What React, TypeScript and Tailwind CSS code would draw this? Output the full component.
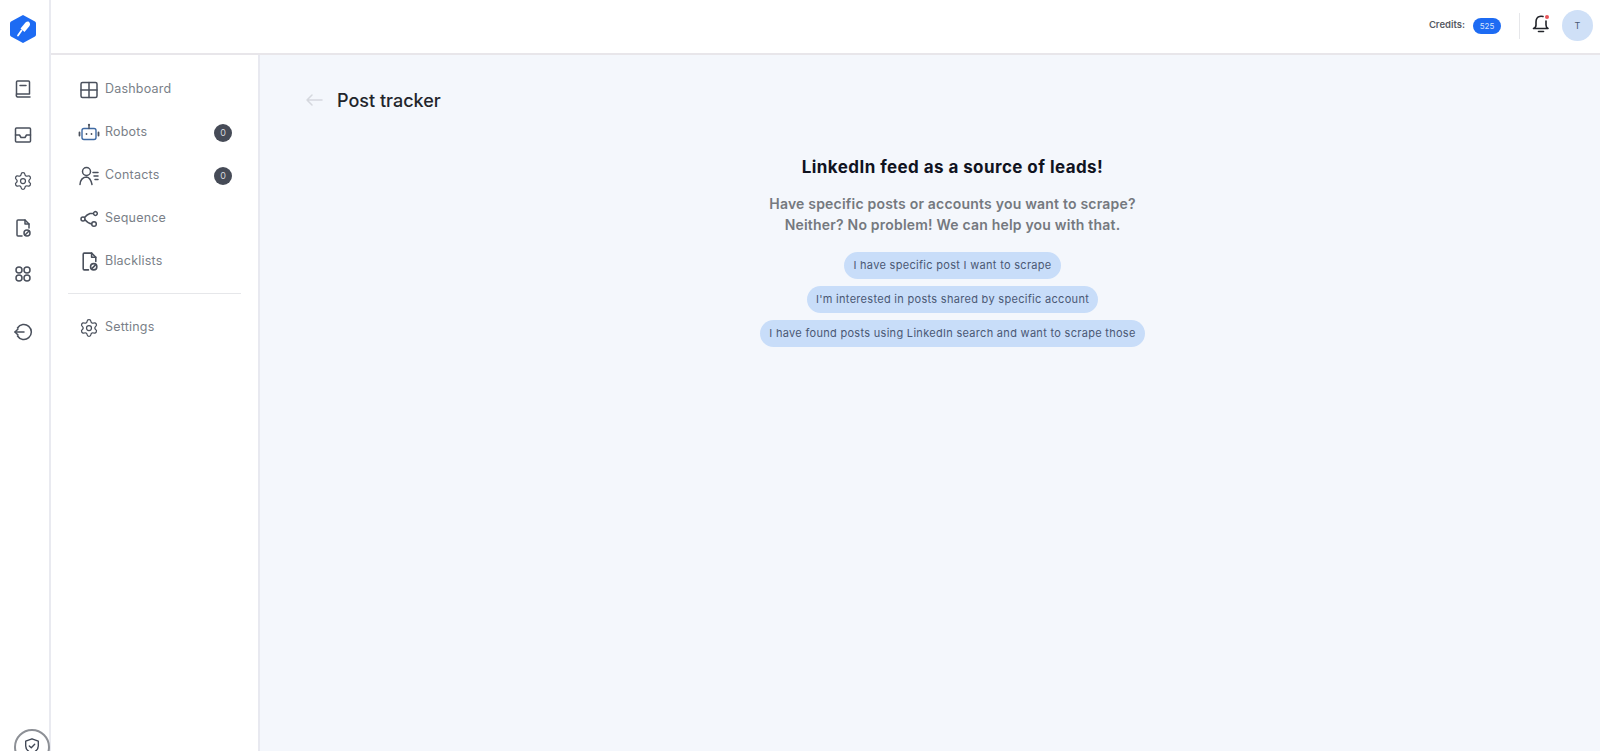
import React from "react";
import { Settings } from "lucide-react";

// shared stroke props for the hand drawn nav icons
const stroke = {
  fill: "none",
  stroke: "currentColor",
  strokeWidth: 1.5,
  strokeLinecap: "round" as const,
  strokeLinejoin: "round" as const,
};

function Logo() {
  return (
    <svg width="28" height="30" viewBox="0 0 28 30">
      <path
        d="M14 1 L26 7.5 Q27 8 27 9.5 V20.5 Q27 22 26 22.5 L14 29 L2 22.5 Q1 22 1 20.5 V9.5 Q1 8 2 7.5 Z"
        fill="#1d6bf3"
      />
      <path d="M19.5 7.5 Q22 9.5 20.5 12 L15.5 18 L11.5 14.5 L16.5 8.5 Q17.8 7.2 19.5 7.5 Z" fill="#fff" />
      <path d="M12.5 16.5 L9 21.5" stroke="#fff" strokeWidth="1.8" strokeLinecap="round" />
    </svg>
  );
}

function BookIcon() {
  return (
    <svg width="20" height="20" viewBox="0 0 20 20" {...stroke}>
      <path d="M3.5 15 V3 Q3.5 2 4.5 2 H15.5 Q16.5 2 16.5 3 V15 Z" />
      <path d="M3.5 15 Q2.8 17.5 4.5 18 H17" />
      <path d="M7 6.5 H13" />
    </svg>
  );
}

function InboxIcon() {
  return (
    <svg width="20" height="20" viewBox="0 0 20 20" {...stroke}>
      <rect x="2.5" y="3" width="15" height="14" rx="1" />
      <path d="M2.5 10 H6.5 L8 12.5 H12 L13.5 10 H17.5" />
    </svg>
  );
}

function FileBlockIcon({ size = 20 }: { size?: number }) {
  return (
    <svg width={size} height={size} viewBox="0 0 20 20" {...stroke}>
      <path d="M9 18 H5 Q4 18 4 17 V3 Q4 2 5 2 H12 L16 6 V10" />
      <path d="M12 2 V6 H16" />
      <circle cx="14" cy="15" r="3" />
      <path d="M12 17 L16 13" />
    </svg>
  );
}

function AppsIcon() {
  return (
    <svg width="20" height="20" viewBox="0 0 20 20" {...stroke}>
      <circle cx="6" cy="6" r="3" />
      <circle cx="14" cy="6" r="3" />
      <circle cx="6" cy="14" r="3" />
      <circle cx="14" cy="14" r="3" />
    </svg>
  );
}

function LogoutIcon() {
  return (
    <svg width="20" height="20" viewBox="0 0 20 20" {...stroke}>
      <path d="M4.5 6 A7.5 7.5 0 1 1 4.5 14" />
      <path d="M2 10 H11" />
      <path d="M5 7 L2 10 L5 13" />
    </svg>
  );
}

function ShieldIcon() {
  return (
    <svg width="18" height="18" viewBox="0 0 20 20" {...stroke}>
      <path d="M10 2 L17 4.5 V10 Q17 15 10 18 Q3 15 3 10 V4.5 Z" />
      <path d="M7 10 L9.2 12 L13 8" />
    </svg>
  );
}

function GridIcon() {
  return (
    <svg width="18" height="18" viewBox="0 0 18 18" {...stroke}>
      <rect x="1" y="1.5" width="16" height="15" rx="1.5" />
      <path d="M9 1.5 V16.5 M1 9 H17" />
    </svg>
  );
}

function RobotIcon() {
  return (
    <svg width="22" height="22" viewBox="0 0 22 22" fill="none" strokeLinecap="round" strokeLinejoin="round">
      <rect x="4" y="6.5" width="14" height="11" rx="2" stroke="#3f6aa3" strokeWidth="1.4" />
      <path d="M11 6.5 V3.5" stroke="#4a505c" strokeWidth="1.4" />
      <circle cx="11" cy="2.8" r="1.1" fill="#4a505c" />
      <path d="M1.5 10.5 V13.5 M20.5 10.5 V13.5" stroke="#4a505c" strokeWidth="1.8" />
      <circle cx="8.5" cy="12" r="0.9" fill="#4a505c" />
      <circle cx="13.5" cy="12" r="0.9" fill="#4a505c" />
    </svg>
  );
}

function ContactsIcon() {
  return (
    <svg width="20" height="20" viewBox="0 0 20 20" {...stroke}>
      <circle cx="7.5" cy="5.5" r="4" />
      <path d="M1 18.5 Q1.5 11.5 7.5 11 Q11.5 11.5 13 18.5" />
      <path d="M14 6.5 H19 M15 10 H19 M16 13.5 H19" />
    </svg>
  );
}

function SequenceIcon() {
  return (
    <svg width="18" height="18" viewBox="0 0 18 18" {...stroke}>
      <circle cx="3" cy="9" r="2" />
      <circle cx="14" cy="14" r="2.3" />
      <path d="M4.5 7.5 Q7 4.5 10 3.5 H13.5 A1.9 1.9 0 1 1 13.5 3.6" />
      <path d="M5 9.8 Q8 13.5 11.7 14" />
    </svg>
  );
}

const railIcons = [
  { icon: <BookIcon />, className: "mt-[35px]" },
  { icon: <InboxIcon />, className: "mt-[26px]" },
  { icon: <Settings size={20} strokeWidth={1.5} />, className: "mt-[26px]" },
  { icon: <FileBlockIcon />, className: "mt-[27px]" },
  { icon: <AppsIcon />, className: "mt-[26px]" },
  { icon: <LogoutIcon />, className: "mt-[38px]" },
];

const navItems = [
  { label: "Dashboard", icon: <GridIcon /> },
  { label: "Robots", icon: <RobotIcon />, count: 0 },
  { label: "Contacts", icon: <ContactsIcon />, count: 0 },
  { label: "Sequence", icon: <SequenceIcon /> },
  { label: "Blacklists", icon: <FileBlockIcon size={21} /> },
];

const options = [
  "I have specific post I want to scrape",
  "I'm interested in posts shared by specific account",
  "I have found posts using LinkedIn search and want to scrape those",
];

function NavRow({ label, icon, count }: { label: string; icon: React.ReactNode; count?: number }) {
  return (
    <div className="flex h-[43px] items-center pl-[25px] pr-[26px]">
      <span className="flex w-[26px] shrink-0 items-center justify-center text-[#4a505c]">{icon}</span>
      <span className="ml-[3px] flex-1 text-[12.5px] tracking-[0.2px] text-[#7a7f88]">{label}</span>
      {count !== undefined && (
        <span className="flex h-[18px] w-[18px] items-center justify-center rounded-full bg-[#464b57] text-[9px] text-[#d5d7dc]">
          {count}
        </span>
      )}
    </div>
  );
}

export default function App() {
  return (
    <div className="relative flex h-[751px] overflow-hidden bg-white font-['Inter',sans-serif]">
      {/* icon rail */}
      <aside className="flex w-[51px] shrink-0 flex-col items-center border-r-2 border-[#e9eaf0] pr-[3px]">
        <div className="mt-[14px] flex h-[30px] items-center">
          <Logo />
        </div>
        {railIcons.map((item, i) => (
          <span key={i} className={`${item.className} flex h-[20px] items-center text-[#4a505c]`}>
            {item.icon}
          </span>
        ))}
      </aside>
      <div className="absolute left-[14px] top-[729px] flex h-[36px] w-[36px] items-start justify-center rounded-full border-2 border-[#8d9096] bg-white pt-[6px] text-[#3f4654]">
        <ShieldIcon />
      </div>

      <div className="flex min-w-0 flex-1 flex-col">
        {/* top bar */}
        <header className="flex h-[55px] shrink-0 items-center justify-end border-b-2 border-[#e8e6ea] bg-white pb-[2px] pr-[7px]">
          <span className="text-[9.5px] font-semibold text-[#555a63]">Credits:</span>
          <span className="ml-[8px] flex h-[16px] w-[28px] items-center justify-center rounded-full bg-[#1d6bf3] text-[8px] text-[#d5e4fd]">
            525
          </span>
          <span className="ml-[18px] h-[26px] w-[1px] bg-[#e6e7ea]" />
          <span className="relative ml-[11px] mb-[4px] text-[#22252b]">
            <svg width="20" height="20" viewBox="0 0 20 20" {...stroke} strokeWidth={1.6}>
              <path d="M12 2.5 Q10 2 8.5 2.5 Q5 3.5 5 8 V11 Q5 13.5 2.5 14.5 H17 Q15 13.5 15 11 V7" />
              <path d="M7.5 17.5 H12.5" />
            </svg>
            <span className="absolute right-[2px] top-[1px] h-[4px] w-[4px] rounded-full bg-[#e8555a]" />
          </span>
          <span className="ml-[11px] flex h-[31px] w-[31px] items-center justify-center rounded-full bg-[#cfe0f7] text-[9px] text-[#4a5a75]">
            T
          </span>
        </header>

        <div className="flex min-h-0 flex-1">
          {/* sidebar */}
          <nav className="w-[209px] shrink-0 border-r-2 border-[#e8e9f0] pt-[13px]">
            {navItems.map((item) => (
              <NavRow key={item.label} {...item} />
            ))}
            <div className="mx-[17px] mb-[12px] mt-[10px] h-[1px] bg-[#e6e7ea]" />
            <NavRow label="Settings" icon={<Settings size={20} strokeWidth={1.5} />} />
          </nav>

          {/* main */}
          <main className="min-w-0 flex-1 bg-[#f4f7fc] pl-[45px]">
            <div className="mt-[33px] flex h-[24px] items-center">
              <svg width="18" height="14" viewBox="0 0 18 14" fill="none" stroke="#d5d8de" strokeWidth="1.5" strokeLinecap="round" strokeLinejoin="round">
                <path d="M17 7 H2 M7 2 L2 7 L7 12" />
              </svg>
              <h1 className="ml-[14px] text-[18px] font-medium text-[#22252b]">Post tracker</h1>
            </div>
            <div className="mt-[45px] flex flex-col items-center">
              <h2 className="text-[17px] font-bold leading-[20px] tracking-[0.43px] text-[#10131f]">
                LinkedIn feed as a source of leads!
              </h2>
              <p className="mt-[16px] text-center text-[14px] font-semibold leading-[21px] tracking-[0.2px] text-[#75797f]">
                Have specific posts or accounts you want to scrape?
                <br />
                Neither? No problem! We can help you with that.
              </p>
              <div className="mt-[17px] flex flex-col items-center gap-[7px]">
                {options.map((text) => (
                  <button
                    key={text}
                    className="h-[27px] rounded-full bg-[#c8ddf9] px-[9px] text-[11px] tracking-[0.3px] text-[#4a5874]"
                  >
                    {text}
                  </button>
                ))}
              </div>
            </div>
          </main>
        </div>
      </div>
    </div>
  );
}
